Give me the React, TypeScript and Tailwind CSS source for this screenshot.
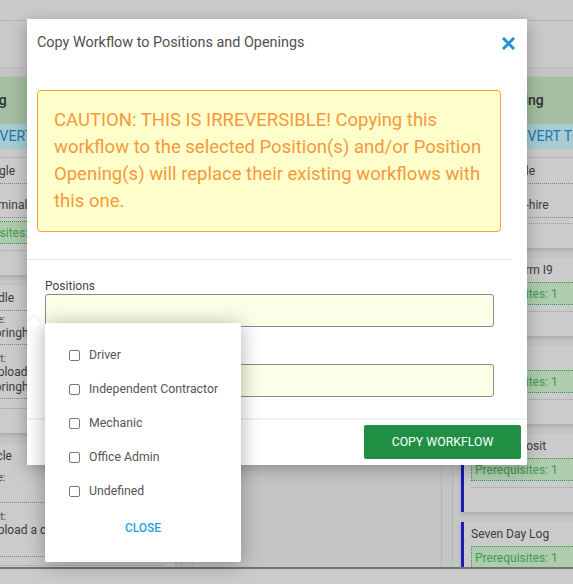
import type { ReactNode } from "react";

const positions = ["Driver", "Independent Contractor", "Mechanic", "Office Admin", "Undefined"];

function Column({ children }: { children?: ReactNode }) {
  return (
    <div className="flex w-[250px] shrink-0 flex-col border-x border-[#a9c0a6] bg-[#c5c5c5]">
      <div className="h-[47px] shrink-0 border-b border-[#bababa] bg-[#c9c9c9]" />
      <div className="flex flex-col gap-[10px] px-[8px] pt-[9px]">{children}</div>
    </div>
  );
}

function Card({ children, accent = false }: { children: ReactNode; accent?: boolean }) {
  return (
    <div
      className={`w-[234px] shrink-0 bg-[#cbcbcb] text-[12px] text-[#3b3b3b] shadow-[0_2px_4px_rgba(0,0,0,0.14)] ${
        accent ? "border-l-[3px] border-[#1b1bb6]" : ""
      }`}
    >
      {children}
    </div>
  );
}

function StageHead({ title, revertPad }: { title: string; revertPad: string }) {
  return (
    <>
      <div className="flex h-[47px] items-center bg-[#a5bfa2] px-[10px] text-[14px] font-medium text-[#2f2f2f]">
        {title}
      </div>
      <div
        className={`flex h-[25px] items-center whitespace-nowrap bg-[#a7ccd4] text-[14px] text-[#2277ab] ${revertPad}`}
      >
        REVERT TO DEFAULT
      </div>
    </>
  );
}

function Line({ children, first = false }: { children: ReactNode; first?: boolean }) {
  return (
    <div
      className={`flex h-[26px] items-center whitespace-nowrap border-b border-dotted border-[#858585] ${
        first ? "" : "mt-[8px]"
      }`}
    >
      {children}
    </div>
  );
}

function Prereq({ className = "" }: { className?: string }) {
  return (
    <div
      className={`flex h-[23px] items-center whitespace-nowrap border border-dotted border-[#36984a] bg-[#afccae] pl-[3px] text-[#3e9a53] ${className}`}
    >
      Prerequisites: 1
    </div>
  );
}

function Footer({ className = "mt-[6px]" }: { className?: string }) {
  return <div className={`h-[25px] border-t border-[#b3b3b3] ${className}`} />;
}

function Field({ label, lines, top }: { label: string; lines: string[]; top: string }) {
  return (
    <div className={`whitespace-nowrap border-b border-dotted border-[#858585] pb-[3px] ${top}`}>
      <div className="text-[10px] leading-[12px] text-[#4a4a4a]">{label}</div>
      {lines.map((l, i) => (
        <div key={i} className="leading-[15px]">
          {l}
        </div>
      ))}
    </div>
  );
}

function TaskCard({ title, accent }: { title: string; accent?: boolean }) {
  return (
    <Card accent={accent}>
      <div className={accent ? "pl-[7px] pr-[10px]" : "px-[10px]"}>
        <div className="flex h-[24px] items-center whitespace-nowrap">{title}</div>
        <Prereq />
        <Footer />
      </div>
    </Card>
  );
}

function Board() {
  return (
    <div className="ml-[-68px] flex h-[546px] gap-[10px] overflow-hidden">
      <Column>
        <Card>
          <StageHead title="Sourcing" revertPad="pl-[42px]" />
          <div className="mt-[8px] border-t border-[#b3b3b3] px-[10px]">
            <Line first>Type: Single</Line>
            <Line>Step: Terminal</Line>
            <Prereq className="mt-[3px]" />
            <Footer />
          </div>
        </Card>
        <Card>
          <div className="px-[10px]">
            <div className="flex h-[26px] items-center whitespace-nowrap border-b border-dotted border-[#858585]">
              Sign Bundle
            </div>
            <Field label="Signer Type:" lines={["Yard 7 Springhill"]} top="pt-[3px]" />
            <Field label="Upload Text:" lines={["Please Upload the", "Yard 7 Springhill"]} top="pt-[8px]" />
            <Footer className="mt-[9px]" />
          </div>
        </Card>
        <Card>
          <div className="px-[10px]">
            <div className="flex h-[26px] items-center whitespace-nowrap">Sign Article</div>
            <Field label="Signer Type:" lines={["Any"]} top="pt-[3px]" />
            <Field label="Upload Text:" lines={["Please Upload a copy of your license", "Thanks."]} top="pt-[8px]" />
            <Footer className="mt-[8px]" />
          </div>
        </Card>
      </Column>
      <Column />
      <Column>
        <Card>
          <StageHead title="Onboarding" revertPad="pl-[50px]" />
          <div className="mt-[8px] border-t border-[#b3b3b3] px-[10px]">
            <Line first>Type: Single</Line>
            <Line>Stage: Pre-hire</Line>
            <Footer className="mt-[5px]" />
          </div>
        </Card>
        <TaskCard title="Submit Form I9" />
        <TaskCard title="Drug Test" />
        <TaskCard title="Direct Deposit" accent />
        <TaskCard title="Seven Day Log" accent />
      </Column>
    </div>
  );
}

function CloseIcon() {
  return (
    <svg width="13" height="13" viewBox="0 0 13 13" aria-hidden="true">
      <path d="M2 2 L11 11 M11 2 L2 11" stroke="#1f93dc" strokeWidth="3" strokeLinecap="square" />
    </svg>
  );
}

function CopyWorkflowModal() {
  return (
    <div className="absolute left-[27px] top-[19px] w-[500px] bg-white shadow-[0_4px_16px_rgba(0,0,0,0.28)]">
      <div className="flex h-[48px] items-center justify-between pl-[10px] pr-[9px]">
        <h4 className="text-[14.4px] text-[#505050]">Copy Workflow to Positions and Openings</h4>
        <button className="flex h-[20px] w-[20px] items-center justify-center" aria-label="Close">
          <CloseIcon />
        </button>
      </div>

      <div className="ml-[10px] mt-[23px] w-[464px] rounded-[4px] border border-[#f8a13c] bg-[#ffffcc] p-[16px] text-[18.5px] leading-[27px] text-[#f7983b]">
        CAUTION: THIS IS IRREVERSIBLE! Copying this workflow to the selected Position(s) and/or Position
        Opening(s) will replace their existing workflows with this one.
      </div>

      <div className="mr-[15px] mt-[27px] h-px bg-[#e8e8e8]" />

      <div className="pl-[18px] pr-[33px]">
        <label className="mt-[19px] mb-[1px] block text-[12px] leading-[14px] text-[#444]">Positions</label>
        <div className="h-[33px] rounded-[3px] border border-[#8a8a8a] bg-[#fcfee8]" />
        <label className="mt-[22px] mb-[1px] block text-[12px] leading-[14px] text-[#444]">Position Openings</label>
        <div className="h-[33px] rounded-[3px] border border-[#8a8a8a] bg-[#fcfee8]" />
      </div>

      <div className="mt-[21px] h-[2px] bg-[#eef2f2]" />

      <div className="flex justify-end pb-[6px] pr-[6px] pt-[5px]">
        <button className="flex h-[34px] w-[157px] items-center justify-center rounded-[2px] bg-[#218f43] text-[12.3px] text-white">
          COPY WORKFLOW
        </button>
      </div>
    </div>
  );
}

function PositionsDropdown() {
  return (
    <div className="absolute left-[45px] top-[323px] h-[239px] w-[196px] rounded-[2px] bg-white shadow-[0_2px_20px_rgba(0,0,0,0.32)]">
      <div className="absolute left-[-16px] top-[-5px] h-[9px] w-[9px] rotate-45 bg-white shadow-[-1px_-1px_1px_rgba(0,0,0,0.07)]" />
      <div className="pt-[15px]">
        {positions.map((p) => (
          <label key={p} className="flex h-[34px] items-center gap-[9px] pl-[24px] text-[12.3px] text-[#555]">
            <span className="h-[11px] w-[11px] rounded-[2px] border border-[#777] bg-white" />
            {p}
          </label>
        ))}
        <div className="mt-[3px] flex h-[34px] items-center justify-center text-[12px] font-medium text-[#2b9fe0]">
          CLOSE
        </div>
      </div>
    </div>
  );
}

export default function App() {
  return (
    <div className="relative h-[584px] w-[573px] overflow-hidden bg-[#c5c5c5] font-['Roboto',sans-serif]">
      <div className="h-[21px] border-b border-[#a9bcb3] bg-[#cacaca]" />
      <Board />
      <div className="h-[17px] border-t-2 border-[#727272] bg-[#cbcbcb]" />

      <CopyWorkflowModal />
      <PositionsDropdown />
    </div>
  );
}
